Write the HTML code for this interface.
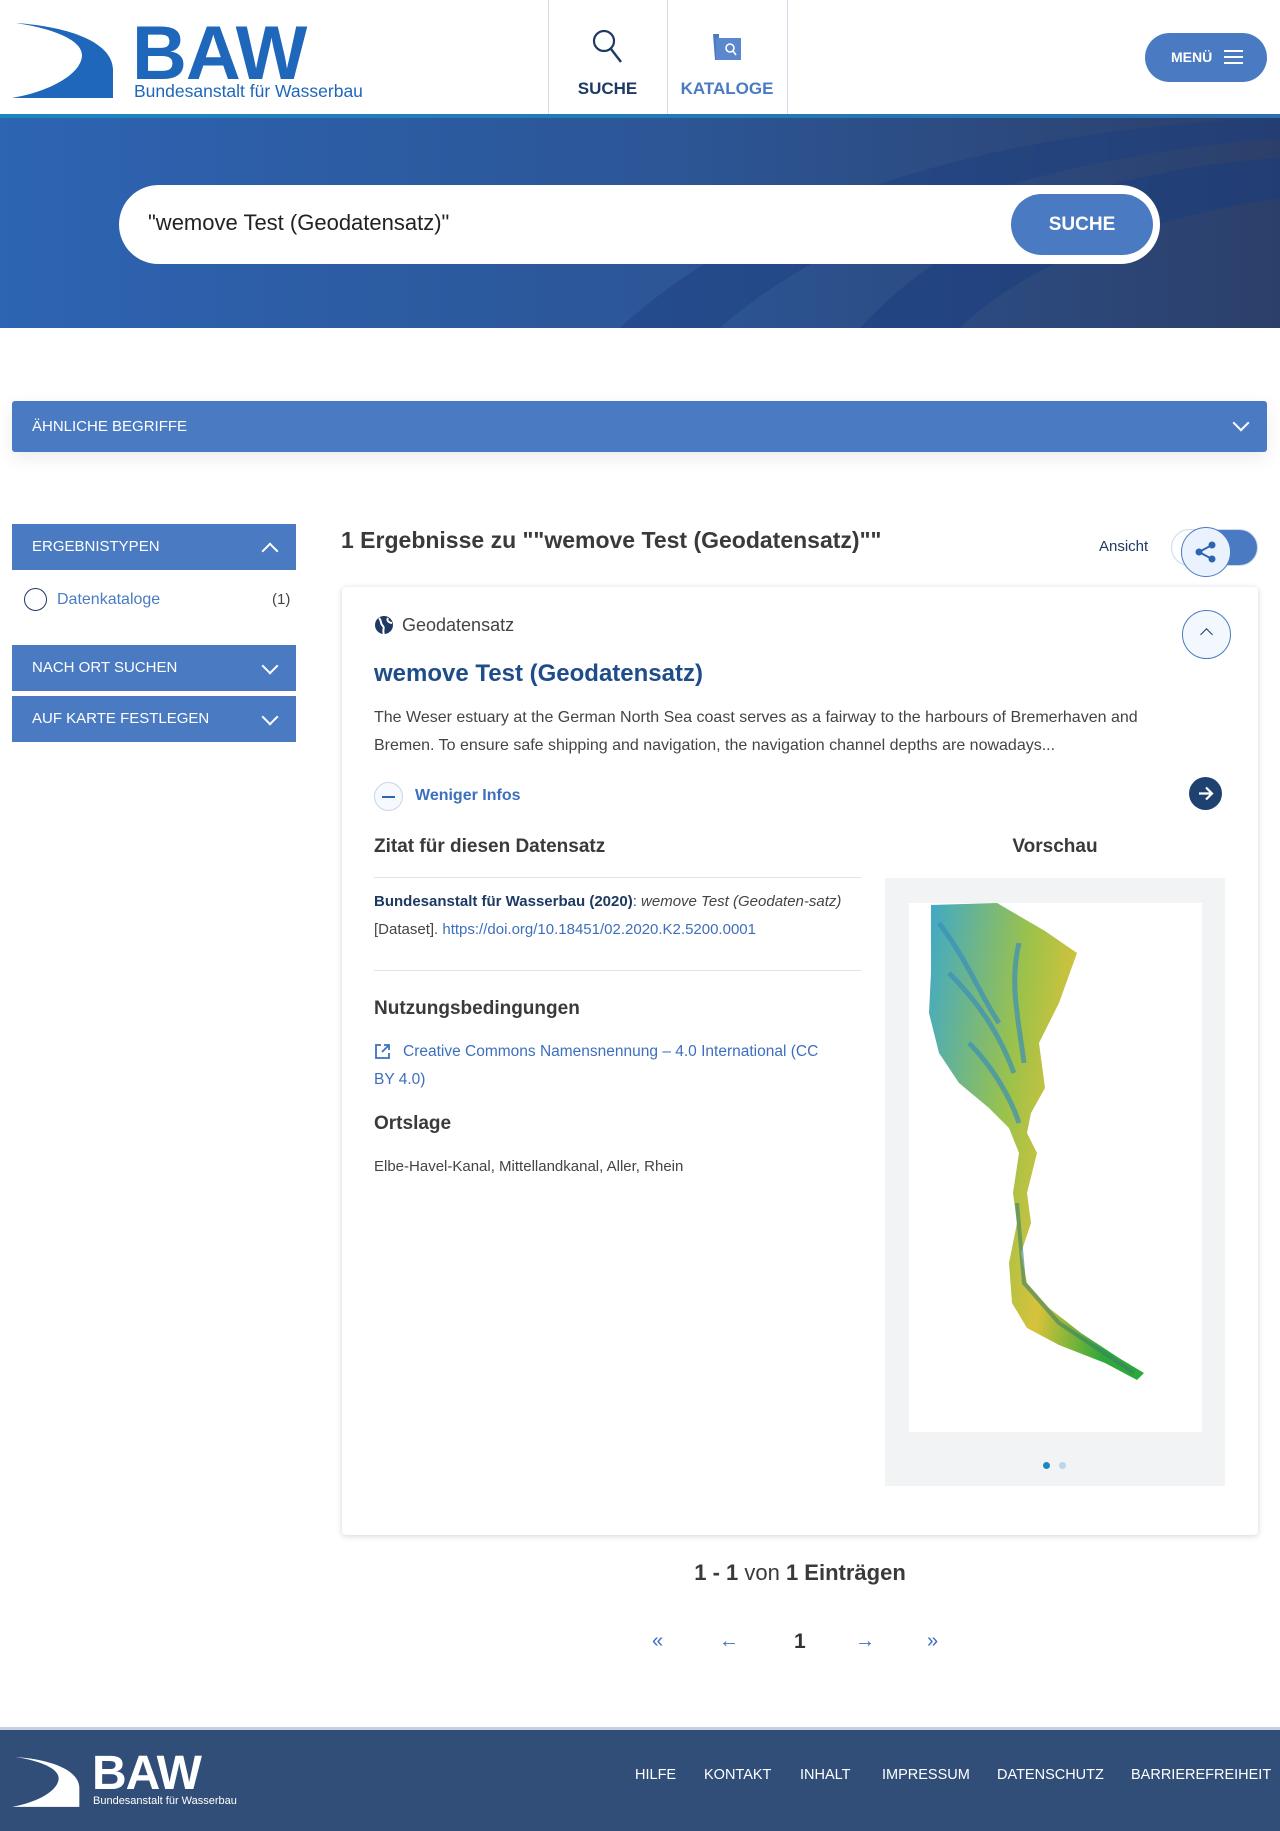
<!DOCTYPE html>
<html><head><meta charset="utf-8"><style>
*{margin:0;padding:0;box-sizing:border-box}
body{width:1280px;height:1831px;position:relative;font-family:"Liberation Sans",sans-serif;background:#fff;color:#333;overflow:hidden}
.a{position:absolute}
.hdr{left:0;top:0;width:1280px;height:116px;background:#fff}
.bar{left:0;top:114px;width:1280px;height:4px;background:linear-gradient(90deg,#1c86c0,#2a6fb0)}
.hero{left:0;top:118px;width:1280px;height:210px;background:linear-gradient(90deg,#2d64b3,#2c5594 55%,#2c3f6a)}
.side{left:12px;width:284px;height:46px;background:#4a7bc2;color:#fff;font-size:15px;padding-left:20px;line-height:46px}
.chev{position:absolute;right:20px;top:15px;width:12px;height:12px;border-right:2px solid #fff;border-bottom:2px solid #fff;transform:rotate(45deg)}
.chev.up{transform:rotate(-135deg);top:21px}
.h3{font-size:19px;font-weight:bold;color:#3a3a3a}
.t{font-size:15.5px;color:#444}
.fl{color:#fff;font-size:14.5px;top:1767px}
</style></head><body>
<div class="a hdr"></div>
<svg class="a" style="left:12px;top:21px" width="102" height="78" viewBox="0 0 102 78"><path d="M4 2 C60 6 100 22 101 48 L101 77 L0 77 C40 70 70 52 70 34 C70 20 44 8 4 2Z" fill="#1e67bb"/></svg>
<div class="a" style="left:132px;top:10px;font-size:76px;font-weight:bold;color:#1e67bb;letter-spacing:-1px">BAW</div>
<div class="a" style="left:134px;top:81px;font-size:17.5px;color:#1e67bb">Bundesanstalt für Wasserbau</div>
<div class="a" style="left:548px;top:0;width:1px;height:116px;background:#d5dde8"></div>
<div class="a" style="left:667px;top:0;width:1px;height:116px;background:#d5dde8"></div>
<div class="a" style="left:787px;top:0;width:1px;height:116px;background:#d5dde8"></div>
<svg class="a" style="left:591px;top:28px" width="34" height="36" viewBox="0 0 34 36"><circle cx="13" cy="13" r="10" fill="none" stroke="#1e3a63" stroke-width="2.2"/><path d="M20 21 L30 34" stroke="#1e3a63" stroke-width="2.4"/></svg>
<div class="a" style="left:548px;top:79px;width:119px;text-align:center;font-size:17px;font-weight:bold;color:#1e3a63">SUCHE</div>
<svg class="a" style="left:711px;top:32px" width="32" height="30" viewBox="0 0 32 30"><path d="M2 2 L8 2 L8 6 L30 6 L30 28 L4 28 Z" fill="#4a7bc2"/><rect x="5" y="6" width="25" height="22" fill="#5b88cc"/><circle cx="19" cy="16" r="4" fill="none" stroke="#fff" stroke-width="1.6"/><path d="M22 19 L25 23" stroke="#fff" stroke-width="1.6"/></svg>
<div class="a" style="left:667px;top:79px;width:120px;text-align:center;font-size:17px;font-weight:bold;color:#4a7bc2">KATALOGE</div>
<div class="a" style="left:1145px;top:33px;width:122px;height:49px;border-radius:25px;background:#4a7bc2;color:#fff;font-size:14px;font-weight:bold;line-height:49px;padding-left:26px">MENÜ</div>
<div class="a" style="left:1224px;top:50px;width:19px;height:2px;background:#fff;box-shadow:0 6px 0 #fff,0 12px 0 #fff"></div>
<div class="a bar"></div>
<div class="a hero"></div>
<svg class="a" style="left:0;top:118px" width="1280" height="210"><path d="M620 210 C760 80 1000 10 1280 0 L1280 20 C1020 40 820 120 720 210Z" fill="#1a3f80" opacity=".45"/><path d="M860 210 C960 100 1120 50 1280 40 L1280 80 C1140 100 1020 150 960 210Z" fill="#183c7e" opacity=".5"/></svg>
<div class="a" style="left:119px;top:185px;width:1041px;height:79px;border-radius:40px;background:#fff"></div>
<div class="a" style="left:148px;top:210px;font-size:22px;color:#222">"wemove Test (Geodatensatz)"</div>
<div class="a" style="left:1011px;top:194px;width:142px;height:61px;border-radius:31px;background:#4a7bc2;color:#fff;font-size:19px;font-weight:bold;text-align:center;line-height:61px">SUCHE</div>
<div class="a" style="left:12px;top:401px;width:1255px;height:51px;background:#4a7bc2;border-radius:3px;color:#fff;font-size:15px;line-height:51px;padding-left:20px;box-shadow:0 6px 18px rgba(0,0,0,.08)">ÄHNLICHE BEGRIFFE<div class="chev" style="top:16px"></div></div>
<div class="a side" style="top:524px">ERGEBNISTYPEN<div class="chev up"></div></div>
<div class="a" style="left:24px;top:588px;width:23px;height:23px;border:1.5px solid #1e3a63;border-radius:50%"></div>
<div class="a" style="left:57px;top:591px;font-size:16px;color:#4a7bc2">Datenkataloge</div>
<div class="a" style="left:272px;top:591px;font-size:15px;color:#444">(1)</div>
<div class="a side" style="top:645px">NACH ORT SUCHEN<div class="chev"></div></div>
<div class="a side" style="top:696px">AUF KARTE FESTLEGEN<div class="chev"></div></div>
<div class="a" style="left:341px;top:527px;font-size:23px;font-weight:bold;color:#3a3a3a">1 Ergebnisse zu ""wemove Test (Geodatensatz)""</div>
<div class="a" style="left:1099px;top:538px;font-size:15px;color:#1e3a63">Ansicht</div>
<div class="a" style="left:1171px;top:529px;width:87px;height:37px;border-radius:19px;background:linear-gradient(90deg,#fff 40%,#4a7bc2 40%);border:1px solid #cfd8e6"></div>
<div class="a" style="left:1181px;top:527px;width:50px;height:50px;border-radius:50%;background:#eaf2fd;border:1.5px solid #4a7bc2"></div>
<svg class="a" style="left:1194px;top:540px" width="24" height="24" viewBox="0 0 24 24"><circle cx="18" cy="5" r="3.5" fill="#2e64b0"/><circle cx="5" cy="12" r="3.5" fill="#2e64b0"/><circle cx="18" cy="19" r="3.5" fill="#2e64b0"/><path d="M5 12 L18 5 M5 12 L18 19" stroke="#2e64b0" stroke-width="2"/></svg>
<div class="a" style="left:342px;top:587px;width:916px;height:948px;background:#fff;border-radius:4px;box-shadow:0 1px 6px rgba(60,80,120,.25)"></div>
<svg class="a" style="left:374px;top:615px" width="20" height="20" viewBox="0 0 20 20"><circle cx="10" cy="10" r="9" fill="#1e3a63"/><path d="M5 3 C8 6 6 9 9 11 C11 13 8 16 10 19 M14 3 C12 6 16 8 18 8" stroke="#fff" stroke-width="2" fill="none"/></svg>
<div class="a" style="left:402px;top:615px;font-size:18px;color:#444">Geodatensatz</div>
<div class="a" style="left:1182px;top:610px;width:49px;height:49px;border-radius:50%;border:1.5px solid #4a7bc2;background:#f3f8fe"></div>
<div class="a" style="left:1202px;top:630px;width:9px;height:9px;border-left:1.5px solid #1e3a63;border-top:1.5px solid #1e3a63;transform:rotate(45deg)"></div>
<div class="a" style="left:374px;top:660px;font-size:24px;font-weight:bold;color:#1e4d8a">wemove Test (Geodatensatz)</div>
<div class="a t" style="left:374px;top:704px;width:800px;line-height:28px;font-size:16px">The Weser estuary at the German North Sea coast serves as a fairway to the harbours of Bremerhaven and Bremen. To ensure safe shipping and navigation, the navigation channel depths are nowadays...</div>
<div class="a" style="left:374px;top:782px;width:29px;height:29px;border-radius:50%;border:1px solid #c9d6ea;background:#f6f9fd"></div>
<div class="a" style="left:382px;top:796px;width:13px;height:2px;background:#2e64b0"></div>
<div class="a" style="left:415px;top:787px;font-size:16px;font-weight:bold;color:#3d6fbd">Weniger Infos</div>
<div class="a" style="left:1189px;top:777px;width:33px;height:33px;border-radius:50%;background:#1e4170"></div>
<svg class="a" style="left:1195px;top:783px" width="21" height="21" viewBox="0 0 21 21"><path d="M4 10.5 H17 M11 4.5 L17 10.5 L11 16.5" stroke="#fff" stroke-width="2.2" fill="none"/></svg>
<div class="a h3" style="left:374px;top:836px">Zitat für diesen Datensatz</div>
<div class="a h3" style="left:885px;top:836px;width:340px;text-align:center">Vorschau</div>
<div class="a" style="left:374px;top:877px;width:487px;height:1px;background:#dfe3ea"></div>
<div class="a t" style="left:374px;top:888px;width:490px;line-height:28px;font-size:15px"><b style="color:#1e3a63">Bundesanstalt für Wasserbau (2020)</b>: <i>wemove Test (Geodaten-satz)</i> [Dataset]. <span style="color:#3d6fbd">https://doi.org/10.18451/02.2020.K2.5200.0001</span></div>
<div class="a" style="left:374px;top:970px;width:487px;height:1px;background:#dfe3ea"></div>
<div class="a h3" style="left:374px;top:998px">Nutzungsbedingungen</div>
<svg class="a" style="left:374px;top:1043px" width="17" height="17" viewBox="0 0 17 17"><path d="M7 2 H2 V15 H15 V10 M10 2 H15 V7 M15 2 L8 9" stroke="#3d6fbd" stroke-width="1.8" fill="none"/></svg>
<div class="a" style="left:374px;top:1038px;width:455px;font-size:15.5px;line-height:28px;color:#3d6fbd;text-indent:29px">Creative Commons Namensnennung – 4.0 International (CC BY 4.0)</div>
<div class="a h3" style="left:374px;top:1113px">Ortslage</div>
<div class="a t" style="left:374px;top:1158px;font-size:15px">Elbe-Havel-Kanal, Mittellandkanal, Aller, Rhein</div>
<div class="a" style="left:885px;top:878px;width:340px;height:608px;background:#f2f3f5"></div>
<div class="a" style="left:909px;top:903px;width:293px;height:529px;background:#fff"></div>
<svg class="a" style="left:909px;top:903px" width="293" height="529" viewBox="0 0 293 529">
<defs><linearGradient id="g" x1="0" y1="0" x2="1" y2="0.3"><stop offset="0" stop-color="#3fa9c9"/><stop offset=".45" stop-color="#9cc24a"/><stop offset=".7" stop-color="#d8c23a"/><stop offset="1" stop-color="#2fa83a"/></linearGradient></defs>
<path d="M22 2 L88 0 L136 28 L168 50 L150 100 L130 140 L136 185 L122 210 L118 230 L128 250 L118 290 L122 320 L112 350 L118 380 L140 405 L172 430 L210 455 L235 470 L228 477 L196 460 L150 442 L118 425 L103 400 L100 360 L108 320 L104 290 L110 250 L100 225 L80 205 L50 180 L30 150 L20 110 L22 70 Z" fill="url(#g)"/>
<path d="M30 20 C60 60 70 90 90 120 M40 70 C70 100 90 130 105 170 M110 40 C100 80 110 120 115 160 M60 140 C80 160 100 190 110 220" stroke="#3a8fb8" stroke-width="5" fill="none" opacity=".7"/>
<path d="M108 300 L115 380 L150 420 L225 470" stroke="#3a7f6a" stroke-width="4" fill="none" opacity=".6"/>
</svg>
<div class="a" style="left:1043px;top:1462px;width:7px;height:7px;border-radius:50%;background:#1e86c8"></div>
<div class="a" style="left:1059px;top:1462px;width:7px;height:7px;border-radius:50%;background:#b8d6ee"></div>
<div class="a" style="left:342px;top:1560px;width:916px;text-align:center;font-size:22px;font-weight:bold;color:#3a3a3a">1 - 1 <span style="font-weight:normal">von</span> 1 Einträgen</div>
<div class="a" style="left:652px;top:1630px;font-size:20px;color:#3d6fbd">«</div>
<div class="a" style="left:719px;top:1630px;font-size:20px;color:#3d6fbd">←</div>
<div class="a" style="left:794px;top:1630px;font-size:21px;font-weight:bold;color:#333">1</div>
<div class="a" style="left:855px;top:1630px;font-size:20px;color:#3d6fbd">→</div>
<div class="a" style="left:927px;top:1630px;font-size:20px;color:#3d6fbd">»</div>
<div class="a" style="left:0;top:1727px;width:1280px;height:104px;background:#314e78;border-top:3px solid #c5d1e1"></div>
<svg class="a" style="left:12px;top:1755px" width="68" height="53" viewBox="0 0 102 78"><path d="M4 2 C60 6 100 22 101 48 L101 77 L0 77 C40 70 70 52 70 34 C70 20 44 8 4 2Z" fill="#fff"/></svg>
<div class="a" style="left:92px;top:1746px;font-size:48px;font-weight:bold;color:#fff;letter-spacing:-1px">BAW</div>
<div class="a" style="left:93px;top:1795px;font-size:11px;color:#fff">Bundesanstalt für Wasserbau</div>
<div class="a fl" style="left:635px">HILFE</div>
<div class="a fl" style="left:704px">KONTAKT</div>
<div class="a fl" style="left:800px">INHALT</div>
<div class="a fl" style="left:882px">IMPRESSUM</div>
<div class="a fl" style="left:997px">DATENSCHUTZ</div>
<div class="a fl" style="left:1131px">BARRIEREFREIHEIT</div>
</body></html>
